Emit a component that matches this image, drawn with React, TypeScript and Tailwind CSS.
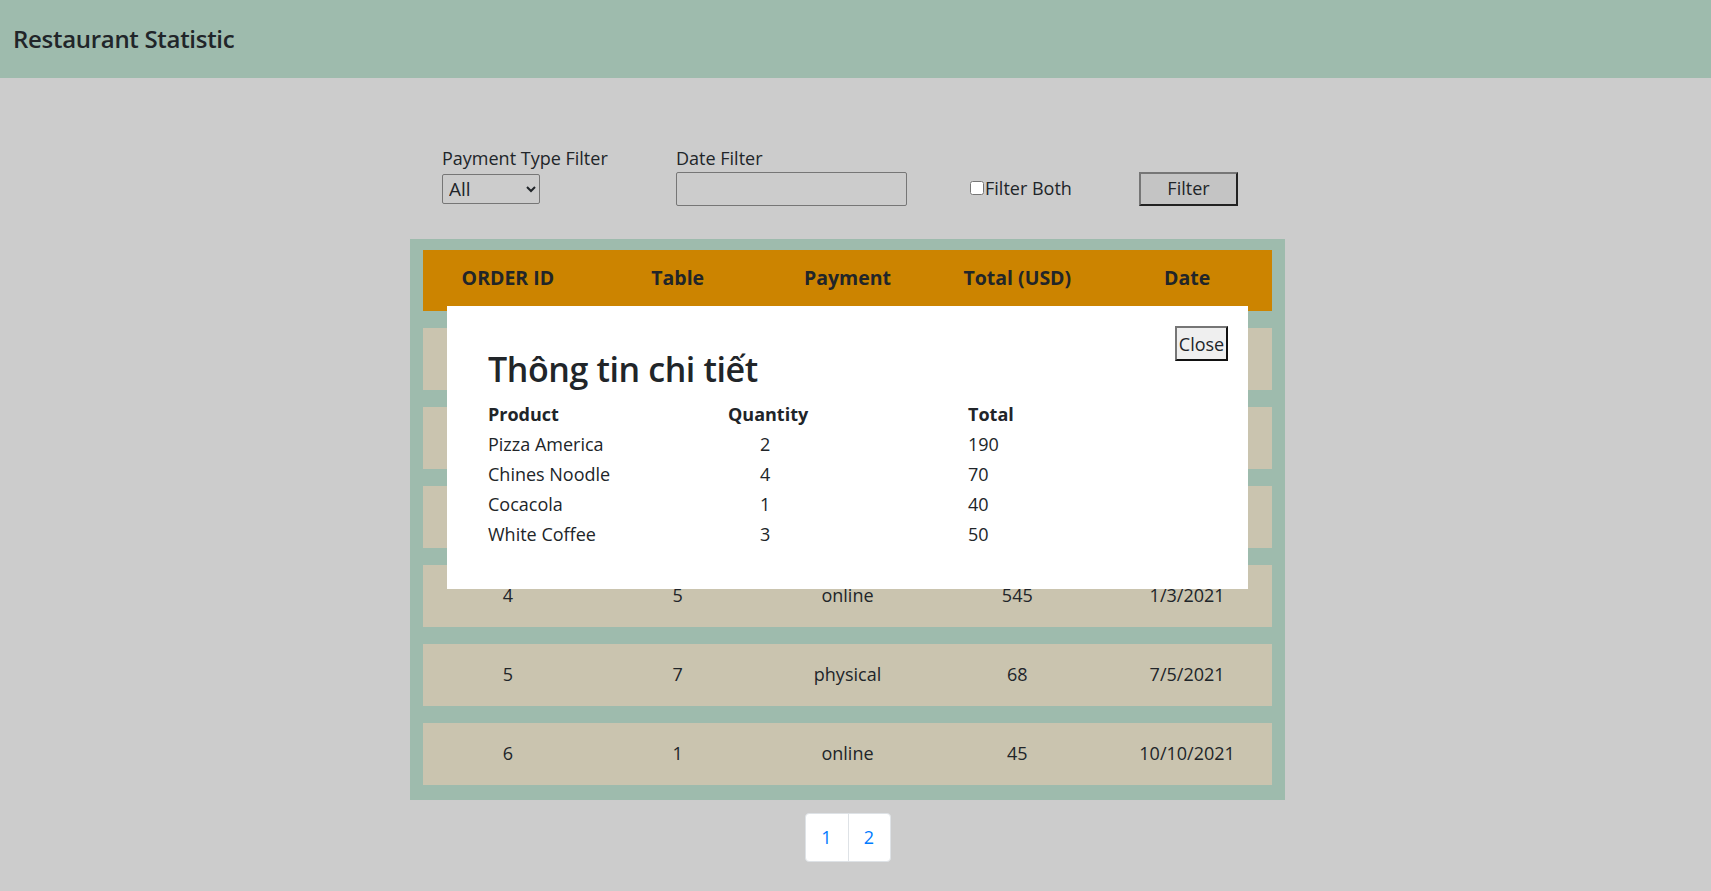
import { useState } from "react";

type Order = {
  id: number;
  table: number;
  payment: string;
  total: number;
  date: string;
};

const orders: Order[] = [
  { id: 1, table: 3, payment: "online", total: 350, date: "2/1/2021" },
  { id: 2, table: 2, payment: "physical", total: 120, date: "5/2/2021" },
  { id: 3, table: 6, payment: "online", total: 210, date: "8/2/2021" },
  { id: 4, table: 5, payment: "online", total: 545, date: "1/3/2021" },
  { id: 5, table: 7, payment: "physical", total: 68, date: "7/5/2021" },
  { id: 6, table: 1, payment: "online", total: 45, date: "10/10/2021" },
];

const details = [
  { product: "Pizza America", quantity: 2, total: 190 },
  { product: "Chines Noodle", quantity: 4, total: 70 },
  { product: "Cocacola", quantity: 1, total: 40 },
  { product: "White Coffee", quantity: 3, total: 50 },
];

const font = "font-['Segoe_UI','Open_Sans',sans-serif]";

export default function App() {
  const [open, setOpen] = useState(true);

  return (
    <div className={`min-h-[891px] bg-[#cccccc] text-[#212529] ${font}`}>
      {/* header */}
      <header className="h-[77.5px] bg-[#9ebbad] flex items-center px-[13px]">
        <h1 className="text-[24px] font-semibold tracking-[-0.3px]">Restaurant Statistic</h1>
      </header>

      {/* filter bar */}
      <div className="flex items-end pl-[442px] pt-[68px] text-[18px]">
        <div className="w-[234px] flex flex-col">
          <label className="leading-[25px]">Payment Type Filter</label>
          <select className="mt-[3px] mb-[2px] w-[98px] h-[29.5px] border border-[#767676] rounded-[2px] px-[2px] text-[19px]">
            <option>All</option>
            <option>online</option>
            <option>physical</option>
          </select>
        </div>
        <div className="w-[294px] flex flex-col">
          <label className="leading-[25px]">Date Filter</label>
          <input
            type="text"
            className="mt-[1px] w-[231px] h-[34px] border border-[#767676] rounded-[2px] px-2"
          />
        </div>
        <div className="w-[169px] flex items-center h-[34px]">
          <input type="checkbox" className="w-[14px] h-[14px] m-0 mr-[1px] -mt-[2px]" />
          <span>Filter Both</span>
        </div>
        <button className="w-[99px] h-[34px] bg-[#c4c4c4] border-2 border-[#767676] border-r-[#222] border-b-[#222] text-[18px]">
          Filter
        </button>
      </div>

      {/* orders table */}
      <div className="pr-[16px] pt-[33px]">
        <div className="relative mx-auto w-[875px] bg-[#9ebbad] px-[13px] pt-[11px] pb-[15px]">
          <div className="flex flex-col gap-[17px] text-[18px]">
            <div className="grid grid-cols-5 h-[61px] items-center bg-[#cc8400] font-bold text-center text-[19.5px] pb-[4px]">
              <div>ORDER ID</div>
              <div>Table</div>
              <div>Payment</div>
              <div>Total (USD)</div>
              <div>Date</div>
            </div>
            {orders.map((o) => (
              <div
                key={o.id}
                className="grid grid-cols-5 h-[62px] items-center bg-[#cac4af] text-center"
              >
                <div>{o.id}</div>
                <div>{o.table}</div>
                <div>{o.payment}</div>
                <div>{o.total}</div>
                <div>{o.date}</div>
              </div>
            ))}
          </div>

          {/* detail modal */}
          {open && (
            <div className="absolute left-[37px] top-[67.5px] w-[801px] h-[282.5px] bg-white pl-[41px] pt-[42px]">
              <button
                onClick={() => setOpen(false)}
                className="absolute top-[20px] right-[20px] w-[53px] h-[35px] bg-[#efefef] border-2 border-[#767676] border-r-[#111] border-b-[#111] text-[18px] leading-none"
              >
                Close
              </button>
              <h2 className="text-[34px] font-semibold tracking-[-0.4px] leading-[42px]">Thông tin chi tiết</h2>
              <div className="mt-[10px] text-[18px]">
                <div className="grid grid-cols-[240px_240px_240px] h-[29.8px] items-center font-bold">
                  <div>Product</div>
                  <div>Quantity</div>
                  <div>Total</div>
                </div>
                {details.map((d) => (
                  <div
                    key={d.product}
                    className="grid grid-cols-[240px_240px_240px] h-[29.8px] items-center"
                  >
                    <div>{d.product}</div>
                    <div className="pl-[32px]">{d.quantity}</div>
                    <div>{d.total}</div>
                  </div>
                ))}
              </div>
            </div>
          )}
        </div>
      </div>

      {/* pagination */}
      <div className="pr-[16px] pt-[13px] flex justify-center">
        <div className="flex bg-white border border-[#dee2e6] rounded-[4px] text-[#007bff] text-[18px]">
          <a href="#" className="w-[42px] h-[47px] flex items-center justify-center">1</a>
          <a href="#" className="w-[42px] h-[47px] flex items-center justify-center border-l border-[#dee2e6]">2</a>
        </div>
      </div>
    </div>
  );
}
